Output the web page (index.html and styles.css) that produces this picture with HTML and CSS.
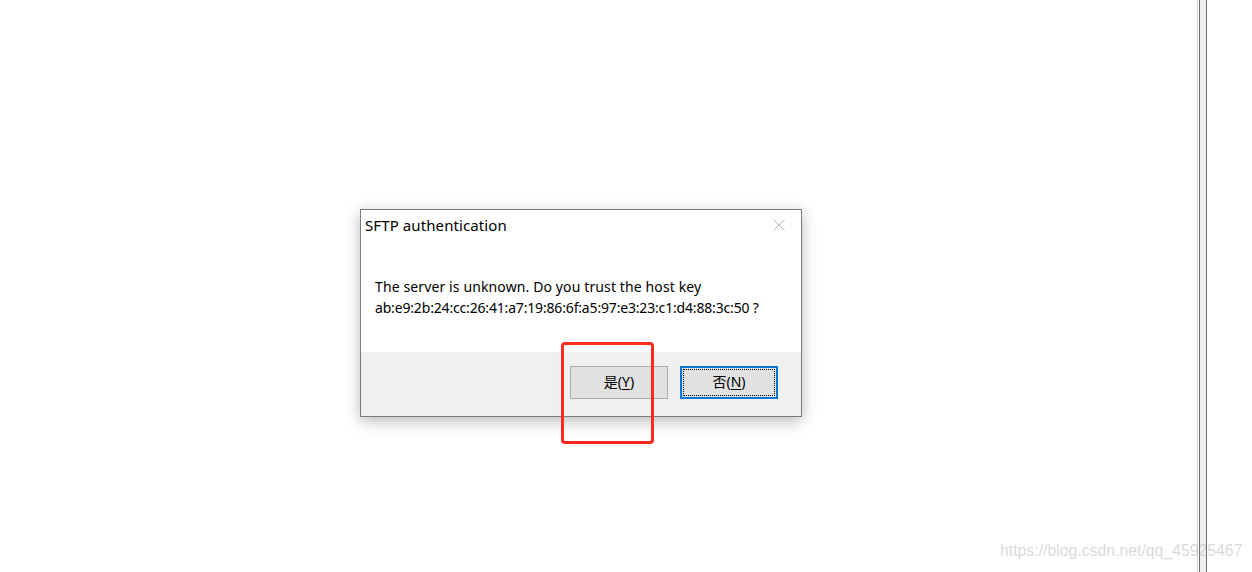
FILE: index.html
```html
<!DOCTYPE html>
<html lang="zh-CN">
<head>
<meta charset="utf-8">
<title>SFTP authentication</title>
<link rel="stylesheet" href="styles.css">
</head>
<body>
<div class="screen">
  <main class="canvas">
    <section class="dialog">
      <header class="titlebar">
        <span class="title">SFTP authentication</span>
        <svg class="close" width="12" height="12" viewBox="0 0 12 12" aria-hidden="true">
          <path d="M0.5 0.5 L11.5 11.5 M11.5 0.5 L0.5 11.5" stroke="#b4b4b4" stroke-width="1" fill="none"/>
        </svg>
      </header>
      <div class="body">
        <p class="message"><span class="line1">The server is unknown. Do you trust the host key</span><br><span class="key">ab:e9:2b:24:cc:26:41:a7:19:86:6f:a5:97:e3:23:c1:d4:88:3c:50 ?</span></p>
      </div>
      <footer class="footer">
        <button class="btn">是(<u>Y</u>)</button>
        <button class="btn btn-default"><span class="focus">否(<u>N</u>)</span></button>
      </footer>
    </section>
  </main>
  <div class="splitter"><div class="splitter-bar"></div></div>
  <div class="margin-right"></div>
  <div class="highlight"></div>
  <div class="watermark">https://blog.csdn.net/qq_45925467</div>
</div>
</body>
</html>
```
FILE: styles.css
```css
* { box-sizing: border-box; }
html, body { margin: 0; padding: 0; background: #ffffff; }
body { font-family: "Noto Sans", "Noto Sans CJK SC", sans-serif; }

.screen {
  position: relative;
  width: 1252px;
  height: 572px;
  display: flex;
  overflow: hidden;
}

.canvas {
  width: 1197px;
  padding: 209px 0 0 360px;
}

.dialog {
  width: 442px;
  height: 208px;
  border: 1px solid #7a7a7a;
  background: #ffffff;
  display: flex;
  flex-direction: column;
  box-shadow: 0 4px 14px rgba(0, 0, 0, 0.28);
}

.titlebar {
  height: 30px;
  display: flex;
  align-items: center;
  justify-content: space-between;
  padding: 0 16px 0 4px;
}

.title {
  font-size: 15px;
  color: #000;
  letter-spacing: 0.1px;
}

.close { display: block; }

.body {
  flex: 1;
  padding: 36px 0 0 14px;
}

.message {
  margin: 0;
  font-size: 14px;
  line-height: 21px;
  color: #000;
}

.line1 { letter-spacing: 0.12px; }
.key { letter-spacing: -0.17px; }

.footer {
  height: 64px;
  background: #f0f0f0;
  display: flex;
  justify-content: flex-end;
  align-items: flex-start;
  gap: 12px;
  padding: 14px 23px 0 0;
}

.btn {
  width: 98px;
  height: 33px;
  border: 1px solid #adadad;
  background: #e1e1e1;
  font-family: "Noto Sans", "Noto Sans CJK SC", sans-serif;
  font-size: 14px;
  color: #000;
  padding: 0 0 3px 0;
  display: flex;
  align-items: center;
  justify-content: center;
}

.btn u { text-underline-offset: 2px; }

.btn-default {
  border: 2px solid #0078d7;
  padding: 1px;
}

.focus {
  width: 100%;
  height: 100%;
  border: 1px dotted #000;
  display: flex;
  align-items: center;
  justify-content: center;
  padding-bottom: 3px;
}

.splitter {
  width: 10px;
  height: 100%;
  border-left: 1px solid #d0d0d0;
  padding-left: 1px;
}

.splitter-bar {
  width: 8px;
  height: 100%;
  background: #f0f0f0;
  border-left: 1px solid #6d6d6d;
  border-right: 1px solid #6d6d6d;
}

.margin-right { flex: 1; }

.highlight {
  position: absolute;
  left: 561px;
  top: 342px;
  width: 93px;
  height: 102px;
  border: 3px solid #ff2a1f;
  border-radius: 4px;
}

.watermark {
  position: absolute;
  left: 1000px;
  top: 542px;
  font-family: "Liberation Sans", Arial, sans-serif;
  font-size: 15.8px;
  color: rgba(170, 170, 170, 0.45);
  white-space: nowrap;
}
```
